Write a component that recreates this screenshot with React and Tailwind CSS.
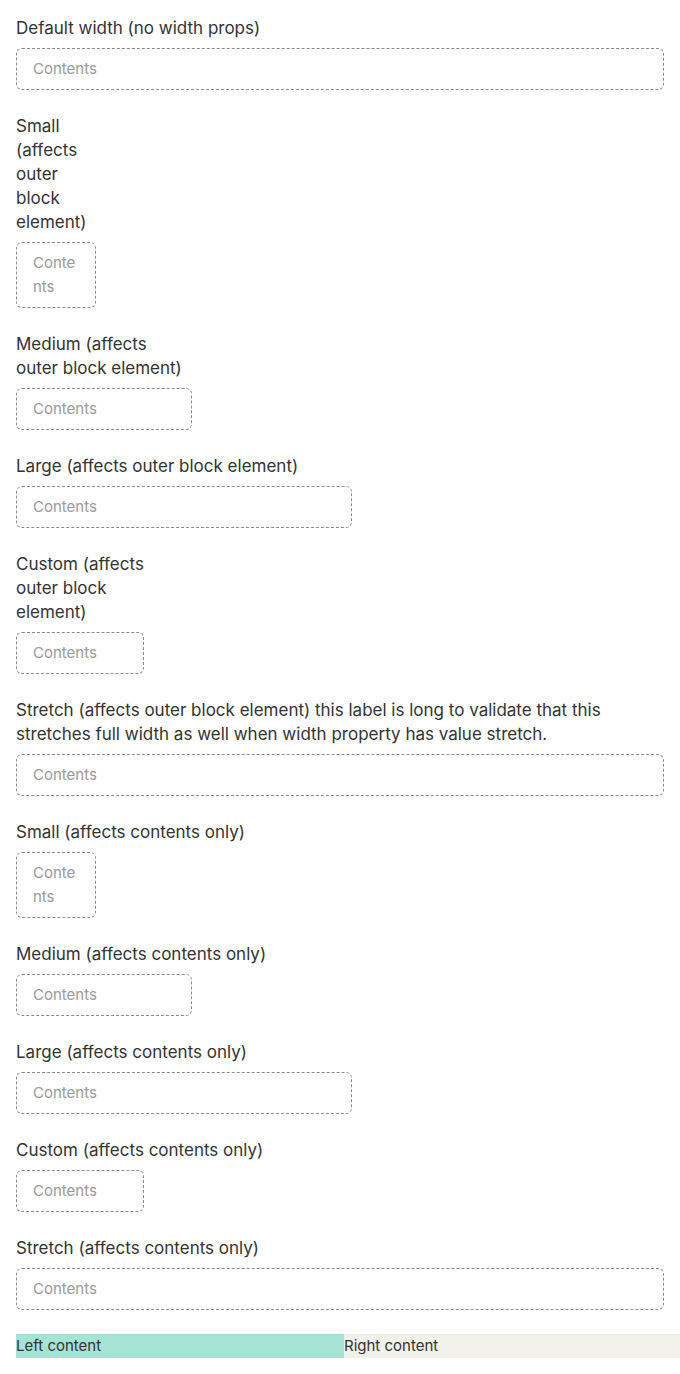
import React from "react";

const sections = [
  { label: "Default width (no width props)", outer: "w-full", box: "w-full" },
  { label: "Small (affects outer block element)", outer: "w-[80px]", box: "w-full" },
  { label: "Medium (affects outer block element)", outer: "w-[176px]", box: "w-full" },
  { label: "Large (affects outer block element)", outer: "w-[336px]", box: "w-full" },
  { label: "Custom (affects outer block element)", outer: "w-[128px]", box: "w-full" },
  {
    label:
      "Stretch (affects outer block element) this label is long to validate that this stretches full width as well when width property has value stretch.",
    outer: "w-full",
    box: "w-full",
  },
  { label: "Small (affects contents only)", outer: "w-full", box: "w-[80px]" },
  { label: "Medium (affects contents only)", outer: "w-full", box: "w-[176px]" },
  { label: "Large (affects contents only)", outer: "w-full", box: "w-[336px]" },
  { label: "Custom (affects contents only)", outer: "w-full", box: "w-[128px]" },
  { label: "Stretch (affects contents only)", outer: "w-full", box: "w-full" },
];

export default function App() {
  return (
    <div
      className="bg-white pl-4 pt-4 pb-4 text-[#333333]"
      style={{ fontFamily: "Inter, 'Noto Sans', sans-serif" }}
    >
      <div className="pr-4 flex flex-col gap-6">
        {sections.map((s, i) => (
          <div key={i} className={s.outer}>
            <div className="text-[17px] leading-6 text-[#333333] break-words">{s.label}</div>
            <div
              className={`${s.box} mt-2 border border-dashed border-[#8a8a8a] rounded-md px-4 py-2 text-[15px] leading-6 text-[#9a9a9a] break-all`}
            >
              Contents
            </div>
          </div>
        ))}
      </div>
      <div className="mt-6 flex text-[15px] leading-6 text-[#333333]">
        <div className="w-[328px] bg-[#a6e3d4]">Left content</div>
        <div className="flex-1 bg-[#f1f1ea]">Right content</div>
      </div>
    </div>
  );
}
